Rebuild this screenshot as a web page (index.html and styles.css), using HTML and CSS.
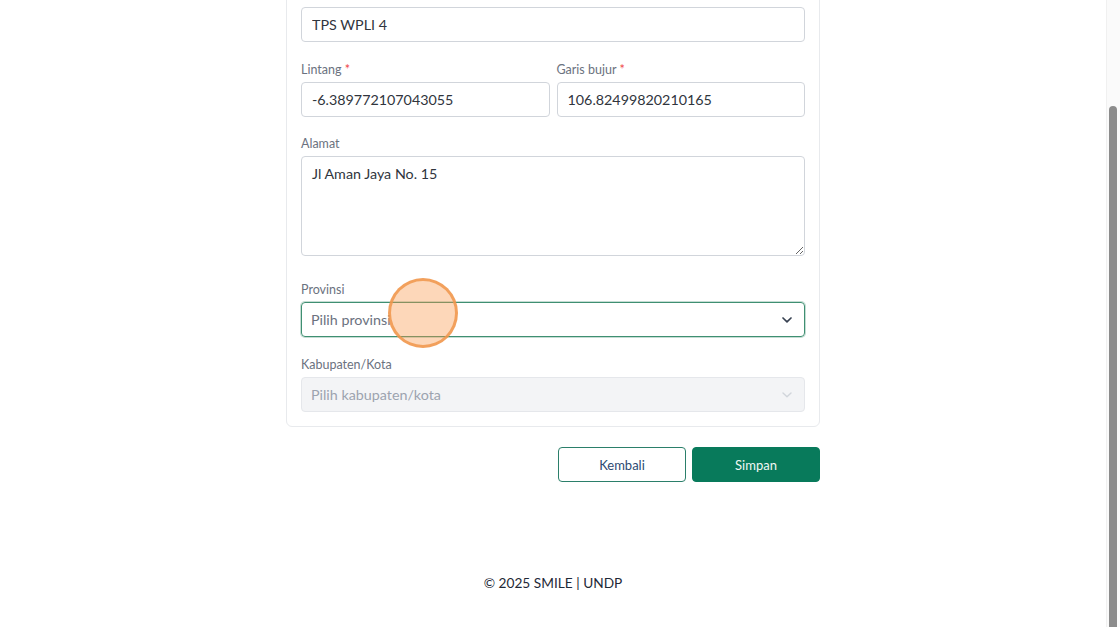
FILE: index.html
```html
<!DOCTYPE html>
<html lang="id">
<head>
<meta charset="utf-8">
<title>Edit TPS</title>
<link rel="stylesheet" href="styles.css">
</head>
<body>
<div class="viewport">
  <main class="page">
    <form class="card">
      <div class="field">
        <label class="label">Nama TPS <span class="req">*</span></label>
        <input class="input" type="text" value="TPS WPLI 4">
      </div>
      <div class="row">
        <div class="field">
          <label class="label">Lintang <span class="req">*</span></label>
          <input class="input" type="text" value="-6.389772107043055">
        </div>
        <div class="field">
          <label class="label">Garis bujur <span class="req">*</span></label>
          <input class="input" type="text" value="106.82499820210165">
        </div>
      </div>
      <div class="field field-area">
        <label class="label">Alamat</label>
        <textarea class="input textarea" spellcheck="false">Jl Aman Jaya No. 15</textarea>
      </div>
      <div class="field">
        <label class="label">Provinsi</label>
        <div class="select focused">
          <span class="placeholder">Pilih provinsi</span>
          <svg class="chev" width="12" height="8" viewBox="0 0 12 8"><path d="M2 2 L6 5.8 L10 2" fill="none" stroke="#374151" stroke-width="1.7" stroke-linecap="round" stroke-linejoin="round"/></svg>
        </div>
      </div>
      <div class="field">
        <label class="label">Kabupaten/Kota</label>
        <div class="select disabled">
          <span class="placeholder">Pilih kabupaten/kota</span>
          <svg class="chev" width="12" height="8" viewBox="0 0 12 8"><path d="M2 2 L6 5.8 L10 2" fill="none" stroke="#d1d5db" stroke-width="1.4" stroke-linecap="round" stroke-linejoin="round"/></svg>
        </div>
      </div>
    </form>
    <div class="actions">
      <button class="btn btn-outline" type="button">Kembali</button>
      <button class="btn btn-primary" type="button">Simpan</button>
    </div>
    <footer class="footer">© 2025 SMILE | UNDP</footer>
  </main>
  <div class="scrollbar"><div class="thumb"></div></div>
</div>
<div class="click-dot"></div>
</body>
</html>
```

FILE: styles.css
```css
* { box-sizing: border-box; }
html, body { margin: 0; height: 100%; overflow: hidden; }
body {
  font-family: "Lato", "Liberation Sans", sans-serif;
  background: #ffffff;
  color: #1f2937;
}
.viewport {
  display: flex;
  height: 627px;
}
.page {
  flex: 1;
  display: flex;
  flex-direction: column;
  align-items: center;
  margin-top: -31px;
}
.card {
  width: 534px;
  border: 1px solid #e8eaed;
  border-radius: 6px;
  padding: 14px;
  display: flex;
  flex-direction: column;
  gap: 17px;
  background: #fff;
}
.row {
  display: grid;
  grid-template-columns: 1fr 1fr;
  gap: 7px;
}
.field {
  display: flex;
  flex-direction: column;
}
.label {
  font-size: 12.5px;
  line-height: 21px;
  height: 20px;
  color: #6b7280;
  margin-bottom: 3px;
}
.req { color: #ef4444; }
.input {
  font-family: inherit;
  height: 35px;
  border: 1px solid #d1d5db;
  border-radius: 4px;
  padding: 0 10px;
  font-size: 14.3px;
  color: #30353d;
  background: #fff;
  width: 100%;
  outline: none;
}
.textarea {
  display: block;
  height: 100px;
  padding: 6px 10px;
  line-height: 22px;
  resize: vertical;
}
.field-area { margin-bottom: 6px; margin-top: -1px; }
.select {
  height: 35px;
  border: 1px solid #d1d5db;
  border-radius: 4px;
  padding: 0 10px 0 9px;
  display: flex;
  align-items: center;
  justify-content: space-between;
  font-size: 14.3px;
}
.select .placeholder { color: #6b7280; }
.select.focused {
  border-color: #3f8f72;
  box-shadow: 0 0 0 1px rgba(63, 143, 114, 0.3);
}
.select.disabled {
  background: #f3f4f6;
  border-color: #e5e7eb;
}
.select.disabled .placeholder { color: #9ca3af; }
.chev { margin-right: 1px; }
.actions {
  width: 534px;
  display: flex;
  justify-content: flex-end;
  gap: 6px;
  margin-top: 20px;
}
.btn {
  font-family: inherit;
  width: 128px;
  height: 35px;
  border-radius: 4px;
  font-size: 13px;
  cursor: pointer;
}
.btn-outline {
  background: #fff;
  border: 1px solid #2b7f6a;
  color: #2d4a72;
}
.btn-primary {
  background: #087a5b;
  border: 1px solid #087a5b;
  color: #f0f7f4;
}
.footer {
  margin-top: 92px;
  font-size: 13.7px;
  color: #1f2937;
}
.scrollbar {
  width: 14px;
  flex: none;
  background: #fafafa;
  border-left: 1px solid #f0f0f0;
  position: relative;
}
.thumb {
  position: absolute;
  left: 2px;
  width: 8px;
  top: 106px;
  bottom: -10px;
  background: #8c8c8c;
  border-radius: 4px;
}
.click-dot {
  position: absolute;
  left: 388px;
  top: 278px;
  width: 70px;
  height: 70px;
  border-radius: 50%;
  background: rgba(250, 150, 70, 0.38);
  border: 3px solid rgba(240, 150, 75, 0.85);
}
```
